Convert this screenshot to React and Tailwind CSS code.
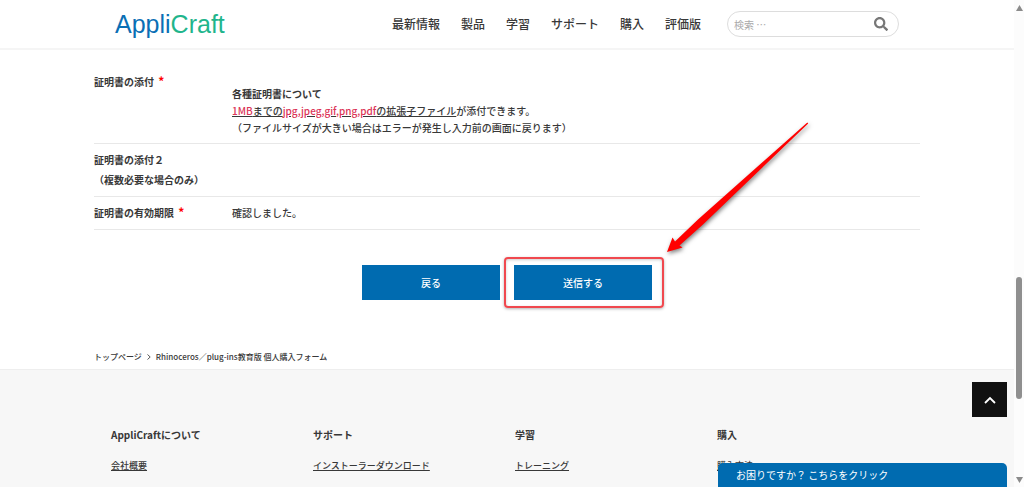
import { FaSearch } from 'react-icons/fa';

const navItems = ['最新情報', '製品', '学習', 'サポート', '購入', '評価版'];

const footerColumns = [
  { title: 'AppliCraftについて', links: ['会社概要'] },
  { title: 'サポート', links: ['インストーラーダウンロード'] },
  { title: '学習', links: ['トレーニング'] },
  { title: '購入', links: ['購入方法'] },
];

function Required() {
  return <span className="ml-[2px] text-[12px] leading-[1] text-[#f00]">*</span>;
}

function Header() {
  return (
    <header className="flex h-[50px] items-center border-b-2 border-[#f5f5f5] px-[115px]">
      <a href="#" className="font-['Liberation_Sans',sans-serif] text-[25px] leading-[26px] text-[#0a6fb5]">
        Appli<span className="text-[#1fb58c]">Craft</span>
      </a>
      <nav className="ml-auto flex gap-[21px] text-[12px] font-medium">
        {navItems.map(item => (
          <a key={item} href="#" className="whitespace-nowrap">{item}</a>
        ))}
      </nav>
      <form role="search" className="ml-[26px] flex h-[26px] w-[172px] items-center rounded-full border border-[#ddd] pl-[6px] pr-[10px]">
        <input
          type="search"
          aria-label="検索"
          placeholder="検索 …"
          className="min-w-0 flex-1 bg-transparent text-[10px] outline-none placeholder:text-[#aaa]"
        />
        <button type="button" aria-label="検索する">
          <FaSearch className="h-[14px] w-[14px] text-[#777]" />
        </button>
      </form>
    </header>
  );
}

function FormTable() {
  return (
    <table className="w-full border-collapse text-left text-[10px] leading-5">
      <tbody>
        <tr className="border-b border-[#e8e8e8]">
          <th scope="row" className="w-[138px] py-[6px] align-top font-bold">証明書の添付 <Required /></th>
          <td className="pb-[7px] pt-[6px] align-top font-medium leading-[17px]">
            <p className="mt-[13px] font-bold">各種証明書について</p>
            <p>
              <span className="underline">
                <span className="text-[#dc3558]">1MB</span>までの
                <span className="text-[#dc3558]">jpg,jpeg,gif,png,pdf</span>の拡張子ファイル
              </span>
              が添付できます。
            </p>
            <p>（ファイルサイズが大きい場合はエラーが発生し入力前の画面に戻ります）</p>
          </td>
        </tr>
        <tr className="border-b border-[#e8e8e8]">
          <th scope="row" className="py-[6px] align-top font-bold">
            証明書の添付２<br />（複数必要な場合のみ）
          </th>
          <td></td>
        </tr>
        <tr className="border-b border-[#e8e8e8]">
          <th scope="row" className="py-[6px] align-top font-bold">証明書の有効期限 <Required /></th>
          <td className="py-[6px] align-top font-medium">確認しました。</td>
        </tr>
      </tbody>
    </table>
  );
}

function SubmitCallout() {
  return (
    <>
      <span className="pointer-events-none absolute -bottom-2 -left-[10px] -right-3 -top-2 rounded-[4px] border-2 border-[#f0484e] shadow-[0_1px_3px_rgba(0,0,0,0.3),inset_0_1px_3px_rgba(0,0,0,0.2)]" />
      <svg
        viewBox="0 0 160 145"
        aria-hidden="true"
        className="pointer-events-none absolute -top-[147px] left-[141px] h-[145px] w-[160px] max-w-none drop-shadow-[1px_2px_2px_rgba(0,0,0,0.5)]"
      >
        <path d="M12 134 L17.500 119.500 L20 123.500 L43 101.500 L152.300 4.500 L153.200 5.500 L48 106.500 L24.500 127.500 L27.500 129.500 Z" fill="#f00" />
      </svg>
    </>
  );
}

function Footer() {
  return (
    <footer className="grow border-t border-[#eee] bg-[#f7f7f7] px-[103px] pt-[55px]">
      <div className="grid grid-cols-4">
        {footerColumns.map(column => (
          <div key={column.title} className="px-2">
            <h2 className="text-[10px] font-bold leading-5">{column.title}</h2>
            <ul className="mt-[11px] text-[9px] font-medium leading-5">
              {column.links.map(link => (
                <li key={link}><a href="#" className="underline">{link}</a></li>
              ))}
            </ul>
          </div>
        ))}
      </div>
    </footer>
  );
}

function Scrollbar() {
  return (
    <div aria-hidden="true" className="flex w-[10px] flex-col items-center bg-[#fcfcfc] pb-1 pt-[5px]">
      <svg viewBox="0 0 7 6" className="h-[6px] w-[7px]"><path d="M3.500 0 L7 6 H0 Z" fill="#8b8b8b" /></svg>
      <div className="grow-[265]" />
      <div className="w-[6px] grow-[122] rounded-full bg-[#8f8f8f]" />
      <div className="grow-[78]" />
      <svg viewBox="0 0 7 6" className="h-[6px] w-[7px]"><path d="M0 0 H7 L3.500 6 Z" fill="#8b8b8b" /></svg>
    </div>
  );
}

export default function App() {
  return (
    <div lang="ja" className="flex h-screen overflow-hidden bg-white font-['Noto_Sans_CJK_JP',sans-serif] text-[#383838]">
      <div className="relative flex min-w-0 flex-1 flex-col overflow-hidden">
        <Header />
        <main className="px-[94px] pt-4">
          <FormTable />
          <div className="mt-[35px] flex justify-center gap-[14px] text-[10px] font-medium text-white">
            <button type="button" className="h-[35px] w-[138px] bg-[#006bb0]">戻る</button>
            <div className="relative">
              <button type="submit" className="h-[35px] w-[138px] bg-[#006bb0]">送信する</button>
              <SubmitCallout />
            </div>
          </div>
          <nav aria-label="パンくず" className="mb-[2px] mt-[47px] flex items-center gap-[5px] text-[8px] font-medium leading-5">
            <a href="#">トップページ</a>
            <svg viewBox="0 0 4 6" className="h-[6px] w-[4px]" aria-hidden="true">
              <path d="M0.500 0.500 L3.200 3 L0.500 5.500" fill="none" stroke="#444" strokeWidth="0.900" />
            </svg>
            <span>Rhinoceros／plug-ins教育版 個人購入フォーム</span>
          </nav>
        </main>
        <Footer />
        <button type="button" aria-label="ページの先頭へ" className="absolute bottom-[70px] right-[7px] flex h-[35px] w-[35px] items-center justify-center bg-[#111]">
          <svg viewBox="0 0 12 8" className="h-[8px] w-[12px]">
            <path d="M1 7 L6 2 L11 7" fill="none" stroke="#fff" strokeWidth="1.800" />
          </svg>
        </button>
        <button type="button" className="absolute bottom-0 right-[7px] h-[24px] w-[289px] rounded-t-[5px] bg-[#006bb0] px-[18px] text-left text-[10px] leading-[24px] text-white">
          お困りですか？ こちらをクリック
        </button>
      </div>
      <Scrollbar />
    </div>
  );
}
